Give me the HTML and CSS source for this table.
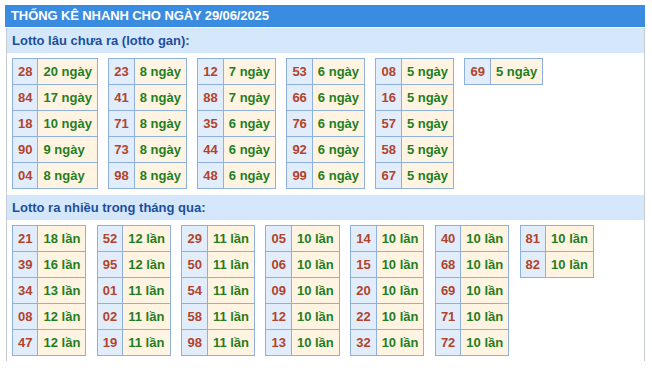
FILE: index.html
```html
<!DOCTYPE html>
<html lang="vi">
<head>
<meta charset="utf-8">
<title>Thống kê nhanh</title>
<link rel="stylesheet" href="styles.css">
</head>
<body>
<div class="box">
  <div class="title">THỐNG KÊ NHANH CHO NGÀY 29/06/2025</div>
  <div class="content">
    <div class="sec-head">Lotto lâu chưa ra (lotto gan):</div>
    <div class="tables gan">
      <table class="lt"><tr><td class="n">28</td><td class="v">20 ngày</td></tr><tr><td class="n">84</td><td class="v">17 ngày</td></tr><tr><td class="n">18</td><td class="v">10 ngày</td></tr><tr><td class="n">90</td><td class="v">9 ngày</td></tr><tr><td class="n">04</td><td class="v">8 ngày</td></tr></table>
      <table class="lt"><tr><td class="n">23</td><td class="v">8 ngày</td></tr><tr><td class="n">41</td><td class="v">8 ngày</td></tr><tr><td class="n">71</td><td class="v">8 ngày</td></tr><tr><td class="n">73</td><td class="v">8 ngày</td></tr><tr><td class="n">98</td><td class="v">8 ngày</td></tr></table>
      <table class="lt"><tr><td class="n">12</td><td class="v">7 ngày</td></tr><tr><td class="n">88</td><td class="v">7 ngày</td></tr><tr><td class="n">35</td><td class="v">6 ngày</td></tr><tr><td class="n">44</td><td class="v">6 ngày</td></tr><tr><td class="n">48</td><td class="v">6 ngày</td></tr></table>
      <table class="lt"><tr><td class="n">53</td><td class="v">6 ngày</td></tr><tr><td class="n">66</td><td class="v">6 ngày</td></tr><tr><td class="n">76</td><td class="v">6 ngày</td></tr><tr><td class="n">92</td><td class="v">6 ngày</td></tr><tr><td class="n">99</td><td class="v">6 ngày</td></tr></table>
      <table class="lt"><tr><td class="n">08</td><td class="v">5 ngày</td></tr><tr><td class="n">16</td><td class="v">5 ngày</td></tr><tr><td class="n">57</td><td class="v">5 ngày</td></tr><tr><td class="n">58</td><td class="v">5 ngày</td></tr><tr><td class="n">67</td><td class="v">5 ngày</td></tr></table>
      <table class="lt"><tr><td class="n">69</td><td class="v">5 ngày</td></tr></table>
    </div>
    <div class="sec-head">Lotto ra nhiều trong tháng qua:</div>
    <div class="tables">
      <table class="lt"><tr><td class="n">21</td><td class="v">18 lần</td></tr><tr><td class="n">39</td><td class="v">16 lần</td></tr><tr><td class="n">34</td><td class="v">13 lần</td></tr><tr><td class="n">08</td><td class="v">12 lần</td></tr><tr><td class="n">47</td><td class="v">12 lần</td></tr></table>
      <table class="lt"><tr><td class="n">52</td><td class="v">12 lần</td></tr><tr><td class="n">95</td><td class="v">12 lần</td></tr><tr><td class="n">01</td><td class="v">11 lần</td></tr><tr><td class="n">02</td><td class="v">11 lần</td></tr><tr><td class="n">19</td><td class="v">11 lần</td></tr></table>
      <table class="lt"><tr><td class="n">29</td><td class="v">11 lần</td></tr><tr><td class="n">50</td><td class="v">11 lần</td></tr><tr><td class="n">54</td><td class="v">11 lần</td></tr><tr><td class="n">58</td><td class="v">11 lần</td></tr><tr><td class="n">98</td><td class="v">11 lần</td></tr></table>
      <table class="lt"><tr><td class="n">05</td><td class="v">10 lần</td></tr><tr><td class="n">06</td><td class="v">10 lần</td></tr><tr><td class="n">09</td><td class="v">10 lần</td></tr><tr><td class="n">12</td><td class="v">10 lần</td></tr><tr><td class="n">13</td><td class="v">10 lần</td></tr></table>
      <table class="lt"><tr><td class="n">14</td><td class="v">10 lần</td></tr><tr><td class="n">15</td><td class="v">10 lần</td></tr><tr><td class="n">20</td><td class="v">10 lần</td></tr><tr><td class="n">22</td><td class="v">10 lần</td></tr><tr><td class="n">32</td><td class="v">10 lần</td></tr></table>
      <table class="lt"><tr><td class="n">40</td><td class="v">10 lần</td></tr><tr><td class="n">68</td><td class="v">10 lần</td></tr><tr><td class="n">69</td><td class="v">10 lần</td></tr><tr><td class="n">71</td><td class="v">10 lần</td></tr><tr><td class="n">72</td><td class="v">10 lần</td></tr></table>
      <table class="lt"><tr><td class="n">81</td><td class="v">10 lần</td></tr><tr><td class="n">82</td><td class="v">10 lần</td></tr></table>
    </div>
  </div>
</div>
</body>
</html>
```
FILE: styles.css
```css
html, body {
  margin: 0;
  padding: 0;
  background: #ffffff;
}
body {
  padding: 5px 0 0 5px;
  font-family: "Liberation Sans", Arial, sans-serif;
  font-size: 13px;
}
.box {
  width: 640px;
}
.title {
  height: 22px;
  line-height: 22px;
  background: #3a8ce0;
  color: #ffffff;
  font-weight: bold;
  font-size: 13px;
  padding-left: 6px;
  letter-spacing: -0.1px;
}
.content {
  margin-left: 1px;
  border-left: 1px solid #c6cad2;
  border-right: 1px solid #c6cad2;
}
.sec-head {
  margin-top: 1px;
  height: 25px;
  line-height: 25px;
  background: #d5e8fb;
  color: #1c4f9e;
  font-weight: bold;
  padding-left: 5px;
}
.tables {
  display: flex;
  flex-wrap: wrap;
  align-items: flex-start;
  column-gap: 10.4px;
  padding: 5px;
}
.lt {
  border-collapse: collapse;
  font-weight: bold;
  font-size: 13px;
}
.lt td {
  border: 1px solid #8eb0de;
  height: 25px;
  padding: 0 5px;
  vertical-align: middle;
  white-space: nowrap;
}
.lt .n {
  background: #e2edfb;
  color: #b2432c;
}
.lt .v {
  background: #fff3e2;
  color: #1f7f1f;
}
```
